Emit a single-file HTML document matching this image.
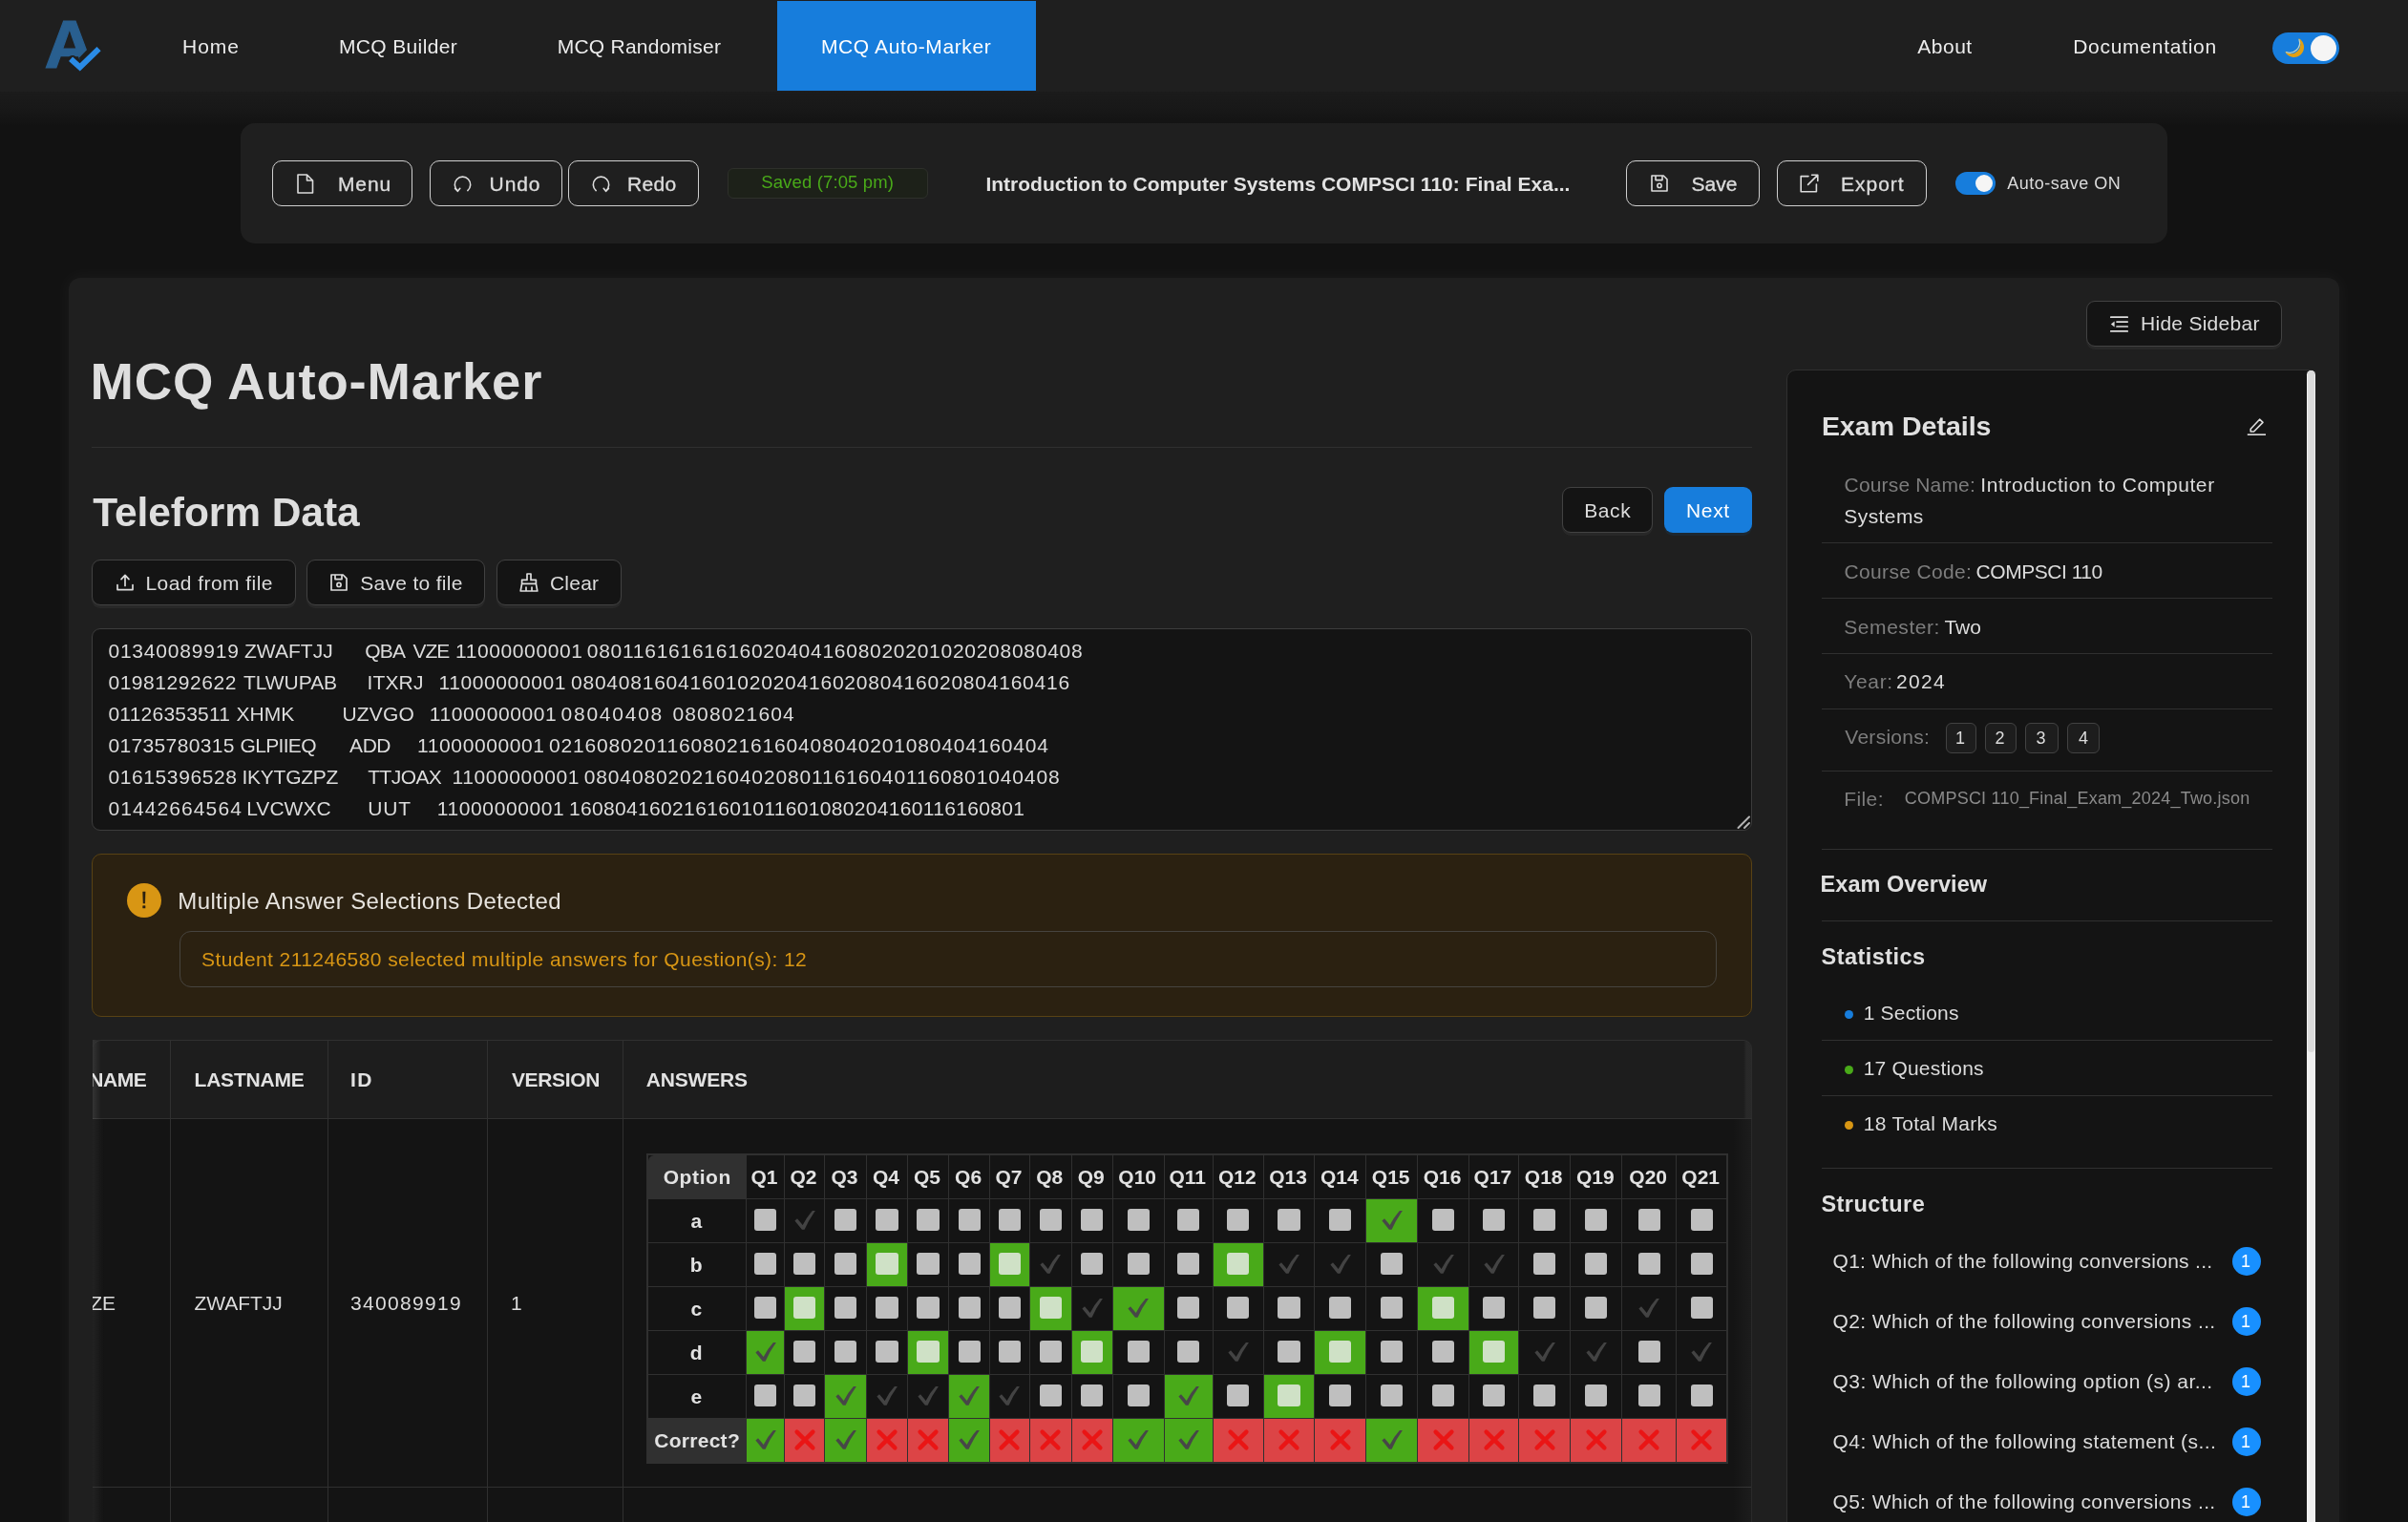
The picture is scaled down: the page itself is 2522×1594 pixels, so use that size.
<!DOCTYPE html>
<html lang="en">
<head>
<meta charset="utf-8">
<title>MCQ Auto-Marker</title>
<style>
html,body{margin:0;padding:0;background:#121212;}
body{width:2522px;height:1594px;overflow:hidden;font-family:"Liberation Sans",sans-serif;}
#app{position:relative;width:2522px;height:1594px;overflow:hidden;will-change:transform;}
.t{position:absolute;white-space:pre;margin:0;padding:0;}
.b{position:absolute;box-sizing:border-box;}
.m{-webkit-text-stroke:0.35px currentColor;}
svg{position:absolute;overflow:visible;}
.hl{position:absolute;height:1px;background:#303030;}
.vl{position:absolute;width:1px;background:#303030;}
</style>
</head>
<body>
<div id="app">
<div class="b" style="left:0;top:96px;width:2522px;height:36px;background:linear-gradient(#1b1b1b,#181818 50%,#141414 85%,#121212);"></div>
<div class="b " style="left:0.0px;top:0.0px;width:2522.0px;height:96.0px;background:#1f1f1f;"></div>
<svg style="left:40px;top:14px" width="70" height="68" viewBox="40 14 70 68">
<text x="0" y="0" font-family="Liberation Sans, sans-serif" font-weight="700" font-size="69.5" fill="#295f8f" stroke="#295f8f" stroke-width="1.2" stroke-linejoin="miter" transform="translate(46.6 71.2) scale(1.05 1)">A</text>
<polygon points="83.2,60.2 91.2,52 101,42 108,42 108,80 83.2,80" fill="#1f1f1f"/>
<polyline points="75.9,63.3 83.7,70.4 101.8,52.8" fill="none" stroke="#1f1f1f" stroke-width="10.4" stroke-linejoin="miter" stroke-linecap="round"/>
<polyline points="76.3,63.7 83.7,70.4 101.4,53.2" fill="none" stroke="#2a8be6" stroke-width="6" stroke-linejoin="miter" stroke-linecap="square"/>
</svg>
<div class="t " style="left:191.0px;top:34.2px;font-size:21px;line-height:29px;color:#ececec;letter-spacing:1.000px;">Home</div>
<div class="t " style="left:355.0px;top:34.2px;font-size:21px;line-height:29px;color:#ececec;letter-spacing:0.350px;">MCQ Builder</div>
<div class="t " style="left:583.7px;top:34.2px;font-size:21px;line-height:29px;color:#ececec;letter-spacing:0.246px;">MCQ Randomiser</div>
<div class="b " style="left:814.0px;top:1.0px;width:271.0px;height:94.0px;background:#177ddc;"></div>
<div class="t " style="left:860.0px;top:34.2px;font-size:21px;line-height:29px;color:#ffffff;letter-spacing:0.607px;">MCQ Auto-Marker</div>
<div class="t " style="left:2008.3px;top:34.2px;font-size:21px;line-height:29px;color:#ececec;letter-spacing:0.500px;">About</div>
<div class="t " style="left:2171.2px;top:34.2px;font-size:21px;line-height:29px;color:#ececec;letter-spacing:0.725px;">Documentation</div>
<div class="b " style="left:2380.0px;top:34.0px;width:70.0px;height:33.0px;background:#177ddc;border-radius:17px;"></div>
<div class="b " style="left:2420.0px;top:37.0px;width:27.0px;height:27.0px;background:#f5f5f5;border-radius:50%;"></div>
<svg style="left:2390px;top:38px" width="26" height="26" viewBox="0 0 26 26">
<path d="M17.3 2.1 A10.5 10.5 0 1 1 3.1 16 A10 10 0 0 0 17.3 2.1 Z" fill="#e3a012"/>
<path d="M4.6 16.6 A10.4 10.4 0 0 0 18 3.6" fill="none" stroke="#d3dcc0" stroke-width="1.2" stroke-linecap="round" opacity="0.9"/>
</svg>
<div class="b " style="left:252.0px;top:129.0px;width:2018.0px;height:126.0px;background:#1f1f1f;border-radius:15px;"></div>
<div class="b " style="left:285.0px;top:168.0px;width:147.0px;height:48.0px;border:1.5px solid #cfcfcf;border-radius:10px;"></div>
<div class="b " style="left:450.0px;top:168.0px;width:139.0px;height:48.0px;border:1.5px solid #cfcfcf;border-radius:10px;"></div>
<div class="b " style="left:595.0px;top:168.0px;width:137.0px;height:48.0px;border:1.5px solid #cfcfcf;border-radius:10px;"></div>
<div class="b " style="left:1703.0px;top:168.0px;width:140.0px;height:48.0px;border:1.5px solid #cfcfcf;border-radius:10px;"></div>
<div class="b " style="left:1861.0px;top:168.0px;width:157.0px;height:48.0px;border:1.5px solid #cfcfcf;border-radius:10px;"></div>
<svg style="left:311px;top:182px" width="18" height="21" viewBox="0 0 18 21"><path d="M1 1 H10.5 L16.5 7 V20 H1 Z M10.5 1 V7 H16.5" fill="none" stroke="#dcdcdc" stroke-width="1.6" stroke-linejoin="round" stroke-linecap="round"/></svg>
<div class="t m" style="left:354.0px;top:178.2px;font-size:21px;line-height:29px;color:#dcdcdc;letter-spacing:0.867px;">Menu</div>
<svg style="left:474px;top:182px" width="21" height="21" viewBox="0 0 21 21"><path d="M5.2 17.6 A8.2 8.2 0 1 1 15.8 17.6" fill="none" stroke="#dcdcdc" stroke-width="1.6" stroke-linejoin="round" stroke-linecap="round"/><path d="M2.6 15.4 L5.4 18.3 L7.8 15.3" fill="none" stroke="#dcdcdc" stroke-width="1.6" stroke-linejoin="round" stroke-linecap="round"/></svg>
<div class="t m" style="left:512.6px;top:178.2px;font-size:21px;line-height:29px;color:#dcdcdc;letter-spacing:0.867px;">Undo</div>
<svg style="left:619px;top:182px" width="21" height="21" viewBox="0 0 21 21"><path d="M5.2 17.6 A8.2 8.2 0 1 1 15.8 17.6" fill="none" stroke="#dcdcdc" stroke-width="1.6" stroke-linejoin="round" stroke-linecap="round"/><path d="M13.2 15.3 L15.6 18.3 L18.4 15.4" fill="none" stroke="#dcdcdc" stroke-width="1.6" stroke-linejoin="round" stroke-linecap="round"/></svg>
<div class="t m" style="left:657.0px;top:178.2px;font-size:21px;line-height:29px;color:#dcdcdc;letter-spacing:0.333px;">Redo</div>
<div class="b " style="left:762.0px;top:176.0px;width:210.0px;height:32.0px;background:#1d2119;border:1px solid #2e302b;border-radius:6px;"></div>
<div class="t " style="left:797.2px;top:178.2px;font-size:18.5px;line-height:26px;color:#49aa19;letter-spacing:0.143px;">Saved (7:05 pm)</div>
<div class="t " style="left:1032.4px;top:177.7px;font-size:21px;line-height:29px;color:#e2e2e2;font-weight:700;letter-spacing:0.011px;">Introduction to Computer Systems COMPSCI 110: Final Exa...</div>
<svg style="left:1728.5px;top:183px" width="18" height="18" viewBox="0 0 18 18"><path d="M1 1 H13.2 L17 4.8 V17 H1 Z M5 1 V5.6 H12 V1" fill="none" stroke="#dcdcdc" stroke-width="1.6" stroke-linejoin="round" stroke-linecap="round"/><circle cx="9" cy="11.4" r="2.1" fill="none" stroke="#dcdcdc" stroke-width="1.6" stroke-linejoin="round" stroke-linecap="round"/></svg>
<div class="t m" style="left:1771.4px;top:178.2px;font-size:21px;line-height:29px;color:#dcdcdc;letter-spacing:0.067px;">Save</div>
<svg style="left:1884.5px;top:182px" width="20" height="20" viewBox="0 0 20 20"><path d="M9 2.6 H1.2 V18.8 H17.4 V11" fill="none" stroke="#dcdcdc" stroke-width="1.6" stroke-linejoin="round" stroke-linecap="round"/><path d="M8.6 11.4 L18.4 1.6 M12.6 1.2 H18.8 V7.4" fill="none" stroke="#dcdcdc" stroke-width="1.6" stroke-linejoin="round" stroke-linecap="round"/></svg>
<div class="t m" style="left:1928.0px;top:178.2px;font-size:21px;line-height:29px;color:#dcdcdc;letter-spacing:0.980px;">Export</div>
<div class="b " style="left:2048.0px;top:180.0px;width:42.0px;height:24.0px;background:#177ddc;border-radius:12px;"></div>
<div class="b " style="left:2069.0px;top:183.0px;width:18.0px;height:18.0px;background:#f5f5f5;border-radius:50%;"></div>
<div class="t " style="left:2102.3px;top:179.7px;font-size:18px;line-height:25px;color:#dcdcdc;letter-spacing:0.500px;">Auto-save ON</div>
<div class="b " style="left:72.0px;top:291.0px;width:2378.0px;height:1409.0px;background:#1f1f1f;border-radius:12px;box-shadow:0 0 16px 4px rgba(255,255,255,0.03);"></div>
<div class="b " style="left:2185.0px;top:314.5px;width:204.5px;height:48.5px;background:#141414;border:1.5px solid #424242;border-radius:9px;box-shadow:0 3px 0 rgba(255,255,255,0.045);"></div>
<svg style="left:2210px;top:329.5px" width="19" height="19" viewBox="0 0 19 19"><path d="M0.8 2.2 H18.2 M7 7.1 H18.2 M7 12 H18.2 M0.8 16.9 H18.2" fill="none" stroke="#dcdcdc" stroke-width="1.7" stroke-linejoin="round" stroke-linecap="round"/><path d="M4.6 6.6 L0.9 9.55 L4.6 12.5 Z" fill="#dcdcdc" stroke="none"/></svg>
<div class="t " style="left:2242.0px;top:324.4px;font-size:21px;line-height:29px;color:#dcdcdc;letter-spacing:0.273px;">Hide Sidebar</div>
<div class="t " style="left:94.6px;top:362.4px;font-size:54.5px;line-height:76px;color:#dedede;font-weight:700;letter-spacing:0.829px;">MCQ Auto-Marker</div>
<div class="hl" style="left:96px;top:467.5px;width:1739px;"></div>
<div class="t " style="left:97.2px;top:507.1px;font-size:42.5px;line-height:59px;color:#dedede;font-weight:700;letter-spacing:-0.067px;">Teleform Data</div>
<div class="b " style="left:1636.2px;top:510.0px;width:94.6px;height:47.8px;background:#141414;border:1.5px solid #424242;border-radius:9px;box-shadow:0 3px 0 rgba(255,255,255,0.045);"></div>
<div class="t " style="left:1659.2px;top:519.6px;font-size:21px;line-height:29px;color:#dcdcdc;letter-spacing:0.600px;">Back</div>
<div class="b " style="left:1743.3px;top:510.0px;width:91.7px;height:47.8px;background:#177ddc;border-radius:9px;box-shadow:0 3px 0 rgba(23,125,220,0.10);"></div>
<div class="t " style="left:1766.0px;top:519.6px;font-size:21px;line-height:29px;color:#ffffff;letter-spacing:0.667px;">Next</div>
<div class="b " style="left:96.3px;top:586.2px;width:213.3px;height:47.4px;background:#141414;border:1.5px solid #424242;border-radius:9px;box-shadow:0 3px 0 rgba(255,255,255,0.045);"></div>
<svg style="left:121.5px;top:601px" width="18" height="18" viewBox="0 0 18 18"><path d="M1 11.6 V16.6 H17 V11.6 M9 12.4 V2 M5 5.6 L9 1.4 L13 5.6" fill="none" stroke="#dcdcdc" stroke-width="1.7" stroke-linejoin="round" stroke-linecap="round"/></svg>
<div class="t " style="left:152.4px;top:595.7px;font-size:21px;line-height:29px;color:#dcdcdc;letter-spacing:0.454px;">Load from file</div>
<div class="b " style="left:321.3px;top:586.2px;width:186.4px;height:47.4px;background:#141414;border:1.5px solid #424242;border-radius:9px;box-shadow:0 3px 0 rgba(255,255,255,0.045);"></div>
<svg style="left:346px;top:601px" width="18" height="18" viewBox="0 0 18 18"><path d="M1 1 H13.2 L17 4.8 V17 H1 Z M5 1 V5.6 H12 V1" fill="none" stroke="#dcdcdc" stroke-width="1.7" stroke-linejoin="round" stroke-linecap="round"/><circle cx="9" cy="11.4" r="2.1" fill="none" stroke="#dcdcdc" stroke-width="1.7" stroke-linejoin="round" stroke-linecap="round"/></svg>
<div class="t " style="left:377.3px;top:595.7px;font-size:21px;line-height:29px;color:#dcdcdc;letter-spacing:0.291px;">Save to file</div>
<div class="b " style="left:520.2px;top:586.2px;width:130.4px;height:47.4px;background:#141414;border:1.5px solid #424242;border-radius:9px;box-shadow:0 3px 0 rgba(255,255,255,0.045);"></div>
<svg style="left:543.5px;top:600px" width="20" height="20" viewBox="0 0 20 20"><path d="M8 1 H12 V7.4 H17.4 V11.4 H2.6 V7.4 H8 Z M2.6 11.4 L1.2 19 H18.8 L17.4 11.4 M7 19 V15 M13 19 V15" fill="none" stroke="#dcdcdc" stroke-width="1.7" stroke-linejoin="round" stroke-linecap="round"/></svg>
<div class="t " style="left:575.9px;top:595.7px;font-size:21px;line-height:29px;color:#dcdcdc;letter-spacing:0.250px;">Clear</div>
<div class="b " style="left:96.0px;top:657.8px;width:1739.0px;height:212.2px;background:#141414;border:1.5px solid #3c3c3c;border-radius:9px;"></div>
<div class="t " style="left:113.4px;top:667.2px;font-size:21px;line-height:29px;color:#dcdcdc;letter-spacing:0.810px;">01340089919</div>
<div class="t " style="left:256.0px;top:667.2px;font-size:21px;line-height:29px;color:#dcdcdc;letter-spacing:0.033px;">ZWAFTJJ</div>
<div class="t " style="left:382.3px;top:667.2px;font-size:21px;line-height:29px;color:#dcdcdc;letter-spacing:-0.800px;">QBA</div>
<div class="t " style="left:432.6px;top:667.2px;font-size:21px;line-height:29px;color:#dcdcdc;letter-spacing:-1.050px;">VZE</div>
<div class="t " style="left:477.0px;top:667.2px;font-size:21px;line-height:29px;color:#dcdcdc;letter-spacing:0.600px;">11000000001</div>
<div class="t " style="left:614.8px;top:667.2px;font-size:21px;line-height:29px;color:#dcdcdc;letter-spacing:0.729px;">080116161616160204041608020201020208080408</div>
<div class="t " style="left:113.4px;top:700.2px;font-size:21px;line-height:29px;color:#dcdcdc;letter-spacing:0.560px;">01981292622</div>
<div class="t " style="left:255.0px;top:700.2px;font-size:21px;line-height:29px;color:#dcdcdc;letter-spacing:-0.050px;">TLWUPAB</div>
<div class="t " style="left:384.5px;top:700.2px;font-size:21px;line-height:29px;color:#dcdcdc;letter-spacing:0.150px;">ITXRJ</div>
<div class="t " style="left:459.5px;top:700.2px;font-size:21px;line-height:29px;color:#dcdcdc;letter-spacing:0.600px;">11000000001</div>
<div class="t " style="left:598.0px;top:700.2px;font-size:21px;line-height:29px;color:#dcdcdc;letter-spacing:0.771px;">080408160416010202041602080416020804160416</div>
<div class="t " style="left:113.4px;top:733.2px;font-size:21px;line-height:29px;color:#dcdcdc;letter-spacing:0.230px;">01126353511</div>
<div class="t " style="left:247.5px;top:733.2px;font-size:21px;line-height:29px;color:#dcdcdc;">XHMK</div>
<div class="t " style="left:358.4px;top:733.2px;font-size:21px;line-height:29px;color:#dcdcdc;letter-spacing:0.200px;">UZVGO</div>
<div class="t " style="left:449.8px;top:733.2px;font-size:21px;line-height:29px;color:#dcdcdc;letter-spacing:0.600px;">11000000001</div>
<div class="t " style="left:587.6px;top:733.2px;font-size:21px;line-height:29px;color:#dcdcdc;letter-spacing:1.743px;">08040408</div>
<div class="t " style="left:704.4px;top:733.2px;font-size:21px;line-height:29px;color:#dcdcdc;letter-spacing:1.178px;">0808021604</div>
<div class="t " style="left:113.4px;top:766.2px;font-size:21px;line-height:29px;color:#dcdcdc;letter-spacing:0.360px;">01735780315</div>
<div class="t " style="left:251.5px;top:766.2px;font-size:21px;line-height:29px;color:#dcdcdc;letter-spacing:-0.667px;">GLPIIEQ</div>
<div class="t " style="left:366.1px;top:766.2px;font-size:21px;line-height:29px;color:#dcdcdc;letter-spacing:-0.450px;">ADD</div>
<div class="t " style="left:437.1px;top:766.2px;font-size:21px;line-height:29px;color:#dcdcdc;letter-spacing:0.600px;">11000000001</div>
<div class="t " style="left:575.0px;top:766.2px;font-size:21px;line-height:29px;color:#dcdcdc;letter-spacing:0.829px;">021608020116080216160408040201080404160404</div>
<div class="t " style="left:113.4px;top:799.2px;font-size:21px;line-height:29px;color:#dcdcdc;letter-spacing:0.610px;">01615396528</div>
<div class="t " style="left:253.5px;top:799.2px;font-size:21px;line-height:29px;color:#dcdcdc;letter-spacing:-0.257px;">IKYTGZPZ</div>
<div class="t " style="left:385.3px;top:799.2px;font-size:21px;line-height:29px;color:#dcdcdc;letter-spacing:-0.600px;">TTJOAX</div>
<div class="t " style="left:473.5px;top:799.2px;font-size:21px;line-height:29px;color:#dcdcdc;letter-spacing:0.600px;">11000000001</div>
<div class="t " style="left:611.7px;top:799.2px;font-size:21px;line-height:29px;color:#dcdcdc;letter-spacing:0.869px;">0804080202160402080116160401160801040408</div>
<div class="t " style="left:113.4px;top:832.2px;font-size:21px;line-height:29px;color:#dcdcdc;letter-spacing:1.100px;">01442664564</div>
<div class="t " style="left:258.2px;top:832.2px;font-size:21px;line-height:29px;color:#dcdcdc;letter-spacing:0.040px;">LVCWXC</div>
<div class="t " style="left:385.3px;top:832.2px;font-size:21px;line-height:29px;color:#dcdcdc;letter-spacing:0.800px;">UUT</div>
<div class="t " style="left:457.8px;top:832.2px;font-size:21px;line-height:29px;color:#dcdcdc;letter-spacing:0.600px;">11000000001</div>
<div class="t " style="left:596.0px;top:832.2px;font-size:21px;line-height:29px;color:#dcdcdc;letter-spacing:0.333px;">1608041602161601011601080204160116160801</div>
<svg style="left:1819px;top:854px" width="14" height="14" viewBox="0 0 14 14"><path d="M1.5 13 L13 1.5 M8 13 L13 8" stroke="#b4b4b4" stroke-width="2" fill="none" stroke-linecap="round"/></svg>
<div class="b " style="left:96.0px;top:893.5px;width:1739.0px;height:171.5px;background:#2b2111;border:1.5px solid #594214;border-radius:10px;"></div>
<div class="b " style="left:133.0px;top:924.8px;width:36.2px;height:36.2px;background:#d89614;border-radius:50%;"></div>
<div class="t " style="left:147.6px;top:926.4px;font-size:24.5px;line-height:34px;color:#2b2111;-webkit-text-stroke:0.5px #2b2111;">!</div>
<div class="t " style="left:186.3px;top:926.9px;font-size:24px;line-height:34px;color:#e6e3de;letter-spacing:0.382px;">Multiple Answer Selections Detected</div>
<div class="b " style="left:187.5px;top:975.0px;width:1610.3px;height:59.3px;border:1.5px solid #47443f;border-radius:12px;"></div>
<div class="t " style="left:211.0px;top:990.2px;font-size:21px;line-height:29px;color:#d89614;letter-spacing:0.419px;">Student 211246580 selected multiple answers for Question(s): 12</div>
<div class="b " style="left:1871.0px;top:386.8px;width:554.0px;height:1313.2px;background:#141414;border:1px solid #303030;border-radius:10px 6px 0 0;"></div>
<div class="b " style="left:2416.0px;top:388.0px;width:9.0px;height:1312.0px;background:#efefef;border-radius:4.5px 4.5px 0 0;"></div>
<div class="b " style="left:2417.0px;top:388.0px;width:7.0px;height:714.0px;background:#dbdbdb;border-radius:4px;"></div>
<div class="t " style="left:1908.0px;top:425.6px;font-size:28.5px;line-height:40px;color:#e0e0e0;font-weight:700;">Exam Details</div>
<svg style="left:2352.5px;top:435.5px" width="21" height="21" viewBox="0 0 21 21"><path d="M4.2 13.2 L13.6 3.2 L17 6.4 L7.6 16 H4.2 Z" fill="none" stroke="#dcdcdc" stroke-width="1.6" stroke-linejoin="round"/><path d="M0.8 19.2 H20" stroke="#dcdcdc" stroke-width="1.6" fill="none"/></svg>
<div class="t " style="left:1931.6px;top:492.8px;font-size:21px;line-height:29px;color:#7d7d7d;letter-spacing:0.164px;">Course Name:</div>
<div class="t " style="left:2074.3px;top:492.8px;font-size:21px;line-height:29px;color:#dcdcdc;letter-spacing:0.596px;">Introduction to Computer</div>
<div class="t " style="left:1931.3px;top:525.8px;font-size:21px;line-height:29px;color:#dcdcdc;letter-spacing:0.417px;">Systems</div>
<div class="hl" style="left:1908.3px;top:568.1px;width:471.70000000000005px;"></div>
<div class="t " style="left:1931.6px;top:583.7px;font-size:21px;line-height:29px;color:#7d7d7d;letter-spacing:0.327px;">Course Code:</div>
<div class="t " style="left:2069.6px;top:583.7px;font-size:21px;line-height:29px;color:#dcdcdc;letter-spacing:-0.470px;">COMPSCI 110</div>
<div class="hl" style="left:1908.3px;top:625.9px;width:471.70000000000005px;"></div>
<div class="t " style="left:1931.3px;top:641.5px;font-size:21px;line-height:29px;color:#7d7d7d;letter-spacing:0.550px;">Semester:</div>
<div class="t " style="left:2036.4px;top:641.5px;font-size:21px;line-height:29px;color:#dcdcdc;letter-spacing:-0.050px;">Two</div>
<div class="hl" style="left:1908.3px;top:684.0px;width:471.70000000000005px;"></div>
<div class="t " style="left:1931.3px;top:699.2px;font-size:21px;line-height:29px;color:#7d7d7d;letter-spacing:0.650px;">Year:</div>
<div class="t " style="left:1986.0px;top:699.2px;font-size:21px;line-height:29px;color:#dcdcdc;letter-spacing:1.333px;">2024</div>
<div class="hl" style="left:1908.3px;top:742.0px;width:471.70000000000005px;"></div>
<div class="t " style="left:1932.3px;top:757.2px;font-size:21px;line-height:29px;color:#7d7d7d;letter-spacing:0.275px;">Versions:</div>
<div class="b " style="left:2038.0px;top:757.0px;width:32.0px;height:32.0px;background:#1d1d1d;border:1.5px solid #424242;border-radius:6px;"></div>
<div class="t " style="left:2048.0px;top:760.7px;font-size:18px;line-height:25px;color:#dcdcdc;">1</div>
<div class="b " style="left:2079.0px;top:757.0px;width:33.0px;height:32.0px;background:#1d1d1d;border:1.5px solid #424242;border-radius:6px;"></div>
<div class="t " style="left:2089.5px;top:760.7px;font-size:18px;line-height:25px;color:#dcdcdc;">2</div>
<div class="b " style="left:2121.0px;top:757.0px;width:35.0px;height:32.0px;background:#1d1d1d;border:1.5px solid #424242;border-radius:6px;"></div>
<div class="t " style="left:2132.5px;top:760.7px;font-size:18px;line-height:25px;color:#dcdcdc;">3</div>
<div class="b " style="left:2165.0px;top:757.0px;width:34.0px;height:32.0px;background:#1d1d1d;border:1.5px solid #424242;border-radius:6px;"></div>
<div class="t " style="left:2177.0px;top:760.7px;font-size:18px;line-height:25px;color:#dcdcdc;">4</div>
<div class="hl" style="left:1908.3px;top:806.8px;width:471.70000000000005px;"></div>
<div class="t " style="left:1931.2px;top:821.9px;font-size:21px;line-height:29px;color:#7d7d7d;letter-spacing:0.400px;">File:</div>
<div class="t " style="left:1994.8px;top:823.7px;font-size:18px;line-height:25px;color:#8a8a8a;letter-spacing:0.217px;">COMPSCI 110_Final_Exam_2024_Two.json</div>
<div class="hl" style="left:1908.3px;top:888.8px;width:471.70000000000005px;"></div>
<div class="t " style="left:1906.6px;top:910.3px;font-size:23.5px;line-height:33px;color:#e0e0e0;font-weight:700;letter-spacing:0.058px;">Exam Overview</div>
<div class="hl" style="left:1908.3px;top:964.0px;width:471.70000000000005px;"></div>
<div class="t " style="left:1907.6px;top:985.7px;font-size:23.5px;line-height:33px;color:#e0e0e0;font-weight:700;letter-spacing:0.433px;">Statistics</div>
<div class="b " style="left:1932.0px;top:1057.7px;width:9.4px;height:9.4px;background:#177ddc;border-radius:50%;"></div>
<div class="t " style="left:1951.7px;top:1045.8px;font-size:21px;line-height:29px;color:#dcdcdc;letter-spacing:0.189px;">1 Sections</div>
<div class="b " style="left:1932.0px;top:1115.7px;width:9.4px;height:9.4px;background:#49aa19;border-radius:50%;"></div>
<div class="t " style="left:1951.7px;top:1103.9px;font-size:21px;line-height:29px;color:#dcdcdc;letter-spacing:0.191px;">17 Questions</div>
<div class="b " style="left:1932.0px;top:1173.6px;width:9.4px;height:9.4px;background:#d89614;border-radius:50%;"></div>
<div class="t " style="left:1951.7px;top:1161.9px;font-size:21px;line-height:29px;color:#dcdcdc;letter-spacing:0.308px;">18 Total Marks</div>
<div class="hl" style="left:1908.3px;top:1088.8px;width:471.70000000000005px;"></div>
<div class="hl" style="left:1908.3px;top:1146.9px;width:471.70000000000005px;"></div>
<div class="hl" style="left:1908.3px;top:1222.9px;width:471.70000000000005px;"></div>
<div class="t " style="left:1907.4px;top:1244.8px;font-size:23.5px;line-height:33px;color:#e0e0e0;font-weight:700;letter-spacing:0.488px;">Structure</div>
<div class="t " style="left:1919.5px;top:1306.0px;font-size:21px;line-height:29px;color:#dcdcdc;letter-spacing:0.305px;">Q1: Which of the following conversions ...</div>
<div class="b " style="left:2338.0px;top:1305.9px;width:30.0px;height:30.0px;background:#1890ff;border-radius:50%;"></div>
<div class="t " style="left:2347.0px;top:1308.7px;font-size:18px;line-height:25px;color:#ffffff;">1</div>
<div class="t " style="left:1919.5px;top:1369.0px;font-size:21px;line-height:29px;color:#dcdcdc;letter-spacing:0.378px;">Q2: Which of the following conversions ...</div>
<div class="b " style="left:2338.0px;top:1368.9px;width:30.0px;height:30.0px;background:#1890ff;border-radius:50%;"></div>
<div class="t " style="left:2347.0px;top:1371.6px;font-size:18px;line-height:25px;color:#ffffff;">1</div>
<div class="t " style="left:1919.5px;top:1431.9px;font-size:21px;line-height:29px;color:#dcdcdc;letter-spacing:0.464px;">Q3: Which of the following option (s) ar...</div>
<div class="b " style="left:2338.0px;top:1431.8px;width:30.0px;height:30.0px;background:#1890ff;border-radius:50%;"></div>
<div class="t " style="left:2347.0px;top:1434.6px;font-size:18px;line-height:25px;color:#ffffff;">1</div>
<div class="t " style="left:1919.5px;top:1494.9px;font-size:21px;line-height:29px;color:#dcdcdc;letter-spacing:0.451px;">Q4: Which of the following statement (s...</div>
<div class="b " style="left:2338.0px;top:1494.8px;width:30.0px;height:30.0px;background:#1890ff;border-radius:50%;"></div>
<div class="t " style="left:2347.0px;top:1497.5px;font-size:18px;line-height:25px;color:#ffffff;">1</div>
<div class="t " style="left:1919.5px;top:1557.8px;font-size:21px;line-height:29px;color:#dcdcdc;letter-spacing:0.378px;">Q5: Which of the following conversions ...</div>
<div class="b " style="left:2338.0px;top:1557.7px;width:30.0px;height:30.0px;background:#1890ff;border-radius:50%;"></div>
<div class="t " style="left:2347.0px;top:1560.5px;font-size:18px;line-height:25px;color:#ffffff;">1</div>
<div class="b " style="left:96.9px;top:1089.0px;width:1738.1px;height:83.0px;background:#1d1d1d;border-radius:9px 9px 0 0;border-top:1px solid #303030;border-right:1px solid #2c2c2c;"></div>
<div class="b " style="left:96.9px;top:1172.0px;width:1738.1px;height:528.0px;background:#141414;"></div>
<div class="hl" style="left:96.9px;top:1171px;width:1738.1px;"></div>
<div class="hl" style="left:96.9px;top:1557px;width:1738.1px;"></div>
<div class="b " style="left:1825.5px;top:1090.0px;width:8.5px;height:81.0px;background:linear-gradient(90deg,rgba(255,255,255,0),rgba(255,255,255,0.05) 40%);border-radius:0 9px 0 0;"></div>
<div class="vl" style="left:177.8px;top:1090px;height:620px;"></div>
<div class="vl" style="left:342.9px;top:1090px;height:620px;"></div>
<div class="vl" style="left:510.1px;top:1090px;height:620px;"></div>
<div class="vl" style="left:651.9px;top:1090px;height:620px;"></div>
<div class="vl" style="left:1834px;top:1172px;height:620px;background:#2a2a2a;"></div>
<div class="b" style="left:96.9px;top:1100px;width:70px;height:60px;overflow:hidden;">
<div class="t " style="left:-62.1px;top:16.1px;font-size:21px;line-height:29px;color:#e2e2e2;font-weight:700;letter-spacing:-0.439px;">FIRSTNAME</div>
</div>
<div class="t " style="left:203.5px;top:1116.1px;font-size:21px;line-height:29px;color:#e2e2e2;font-weight:700;letter-spacing:-0.200px;">LASTNAME</div>
<div class="t " style="left:367.1px;top:1116.1px;font-size:21px;line-height:29px;color:#e2e2e2;font-weight:700;letter-spacing:1.400px;">ID</div>
<div class="t " style="left:535.9px;top:1116.1px;font-size:21px;line-height:29px;color:#e2e2e2;font-weight:700;letter-spacing:-0.333px;">VERSION</div>
<div class="t " style="left:676.7px;top:1116.1px;font-size:21px;line-height:29px;color:#e2e2e2;font-weight:700;letter-spacing:-0.167px;">ANSWERS</div>
<div class="b " style="left:1815.0px;top:1172.0px;width:19.0px;height:528.0px;background:linear-gradient(90deg,rgba(255,255,255,0),rgba(255,255,255,0.035));"></div>
<div class="b " style="left:96.9px;top:1089.0px;width:9.0px;height:83.0px;background:linear-gradient(90deg,rgba(255,255,255,0.10),rgba(255,255,255,0));"></div>
<div class="b " style="left:96.9px;top:1172.0px;width:12.0px;height:528.0px;background:linear-gradient(90deg,rgba(70,70,70,0.28),rgba(40,40,40,0));"></div>
<div class="b" style="left:96.9px;top:1340px;width:60px;height:60px;overflow:hidden;">
<div class="t" style="left:-65.7px;top:9.6px;font-size:21px;line-height:30px;color:#dcdcdc;">QBA VZE</div></div>
<div class="t " style="left:203.5px;top:1350.1px;font-size:21px;line-height:29px;color:#dcdcdc;letter-spacing:-0.033px;">ZWAFTJJ</div>
<div class="t " style="left:367.1px;top:1350.1px;font-size:21px;line-height:29px;color:#dcdcdc;letter-spacing:1.300px;">340089919</div>
<div class="t " style="left:534.9px;top:1350.1px;font-size:21px;line-height:29px;color:#dcdcdc;">1</div>
<div class="b " style="left:677.0px;top:1208.0px;width:1133.1px;height:325.0px;background:#303030;"></div>
<div class="b " style="left:678.8px;top:1209.5px;width:102.2px;height:45.5px;background:#141414;"></div>
<div class="b " style="left:679.3px;top:1210.0px;width:101.8px;height:45.0px;background:#303030;border-radius:6px 0 0 0;"></div>
<div class="t " style="left:694.7px;top:1218.3px;font-size:21px;line-height:29px;color:#e2e2e2;font-weight:700;letter-spacing:0.600px;">Option</div>
<div class="b " style="left:782.1px;top:1210.0px;width:38.9px;height:45.0px;background:#141414;"></div>
<div class="t " style="left:786.5px;top:1218.3px;font-size:21px;line-height:29px;color:#e2e2e2;font-weight:700;">Q1</div>
<div class="b " style="left:822.0px;top:1210.0px;width:41.0px;height:45.0px;background:#141414;"></div>
<div class="t " style="left:827.5px;top:1218.3px;font-size:21px;line-height:29px;color:#e2e2e2;font-weight:700;">Q2</div>
<div class="b " style="left:864.0px;top:1210.0px;width:43.0px;height:45.0px;background:#141414;"></div>
<div class="t " style="left:870.5px;top:1218.3px;font-size:21px;line-height:29px;color:#e2e2e2;font-weight:700;">Q3</div>
<div class="b " style="left:908.0px;top:1210.0px;width:41.9px;height:45.0px;background:#141414;"></div>
<div class="t " style="left:914.0px;top:1218.3px;font-size:21px;line-height:29px;color:#e2e2e2;font-weight:700;">Q4</div>
<div class="b " style="left:950.9px;top:1210.0px;width:42.2px;height:45.0px;background:#141414;"></div>
<div class="t " style="left:957.0px;top:1218.3px;font-size:21px;line-height:29px;color:#e2e2e2;font-weight:700;">Q5</div>
<div class="b " style="left:994.1px;top:1210.0px;width:42.0px;height:45.0px;background:#141414;"></div>
<div class="t " style="left:1000.1px;top:1218.3px;font-size:21px;line-height:29px;color:#e2e2e2;font-weight:700;">Q6</div>
<div class="b " style="left:1037.1px;top:1210.0px;width:40.6px;height:45.0px;background:#141414;"></div>
<div class="t " style="left:1042.4px;top:1218.3px;font-size:21px;line-height:29px;color:#e2e2e2;font-weight:700;">Q7</div>
<div class="b " style="left:1078.7px;top:1210.0px;width:43.0px;height:45.0px;background:#141414;"></div>
<div class="t " style="left:1085.2px;top:1218.3px;font-size:21px;line-height:29px;color:#e2e2e2;font-weight:700;">Q8</div>
<div class="b " style="left:1122.7px;top:1210.0px;width:42.0px;height:45.0px;background:#141414;"></div>
<div class="t " style="left:1128.7px;top:1218.3px;font-size:21px;line-height:29px;color:#e2e2e2;font-weight:700;">Q9</div>
<div class="b " style="left:1165.7px;top:1210.0px;width:52.9px;height:45.0px;background:#141414;"></div>
<div class="t " style="left:1171.3px;top:1218.3px;font-size:21px;line-height:29px;color:#e2e2e2;font-weight:700;">Q10</div>
<div class="b " style="left:1219.6px;top:1210.0px;width:50.3px;height:45.0px;background:#141414;"></div>
<div class="t " style="left:1224.5px;top:1218.3px;font-size:21px;line-height:29px;color:#e2e2e2;font-weight:700;">Q11</div>
<div class="b " style="left:1270.9px;top:1210.0px;width:51.9px;height:45.0px;background:#141414;"></div>
<div class="t " style="left:1276.0px;top:1218.3px;font-size:21px;line-height:29px;color:#e2e2e2;font-weight:700;">Q12</div>
<div class="b " style="left:1323.8px;top:1210.0px;width:52.4px;height:45.0px;background:#141414;"></div>
<div class="t " style="left:1329.2px;top:1218.3px;font-size:21px;line-height:29px;color:#e2e2e2;font-weight:700;">Q13</div>
<div class="b " style="left:1377.2px;top:1210.0px;width:53.0px;height:45.0px;background:#141414;"></div>
<div class="t " style="left:1382.9px;top:1218.3px;font-size:21px;line-height:29px;color:#e2e2e2;font-weight:700;">Q14</div>
<div class="b " style="left:1431.2px;top:1210.0px;width:52.9px;height:45.0px;background:#141414;"></div>
<div class="t " style="left:1436.8px;top:1218.3px;font-size:21px;line-height:29px;color:#e2e2e2;font-weight:700;">Q15</div>
<div class="b " style="left:1485.1px;top:1210.0px;width:52.9px;height:45.0px;background:#141414;"></div>
<div class="t " style="left:1490.7px;top:1218.3px;font-size:21px;line-height:29px;color:#e2e2e2;font-weight:700;">Q16</div>
<div class="b " style="left:1539.0px;top:1210.0px;width:50.9px;height:45.0px;background:#141414;"></div>
<div class="t " style="left:1543.6px;top:1218.3px;font-size:21px;line-height:29px;color:#e2e2e2;font-weight:700;">Q17</div>
<div class="b " style="left:1590.9px;top:1210.0px;width:53.5px;height:45.0px;background:#141414;"></div>
<div class="t " style="left:1596.8px;top:1218.3px;font-size:21px;line-height:29px;color:#e2e2e2;font-weight:700;">Q18</div>
<div class="b " style="left:1645.4px;top:1210.0px;width:52.9px;height:45.0px;background:#141414;"></div>
<div class="t " style="left:1651.0px;top:1218.3px;font-size:21px;line-height:29px;color:#e2e2e2;font-weight:700;">Q19</div>
<div class="b " style="left:1699.3px;top:1210.0px;width:55.6px;height:45.0px;background:#141414;"></div>
<div class="t " style="left:1706.3px;top:1218.3px;font-size:21px;line-height:29px;color:#e2e2e2;font-weight:700;">Q20</div>
<div class="b " style="left:1755.9px;top:1210.0px;width:52.5px;height:45.0px;background:#141414;"></div>
<div class="t " style="left:1761.3px;top:1218.3px;font-size:21px;line-height:29px;color:#e2e2e2;font-weight:700;">Q21</div>
<div class="b " style="left:679.3px;top:1256.0px;width:101.8px;height:45.0px;background:#141414;"></div>
<div class="t " style="left:723.4px;top:1264.3px;font-size:21px;line-height:29px;color:#e2e2e2;font-weight:700;">a</div>
<div class="b " style="left:782.1px;top:1256.0px;width:38.9px;height:45.0px;background:#141414;"></div>
<div class="b " style="left:789.9px;top:1266.1px;width:23.2px;height:23.2px;background:#bfbfbf;border-radius:3px;"></div>
<div class="b " style="left:822.0px;top:1256.0px;width:41.0px;height:45.0px;background:#141414;"></div>
<svg style="left:831.5px;top:1266.5px" width="22" height="22" viewBox="0 0 22 22"><path d="M0.4 11.6 L3 9.3 L8.7 15.9 Q13 7.6 18.9 1.1 L21.9 1.1 Q15.2 10.4 10.6 20.7 L7.9 20.7 Z" fill="#434343"/></svg>
<div class="b " style="left:864.0px;top:1256.0px;width:43.0px;height:45.0px;background:#141414;"></div>
<div class="b " style="left:873.9px;top:1266.1px;width:23.2px;height:23.2px;background:#bfbfbf;border-radius:3px;"></div>
<div class="b " style="left:908.0px;top:1256.0px;width:41.9px;height:45.0px;background:#141414;"></div>
<div class="b " style="left:917.4px;top:1266.1px;width:23.2px;height:23.2px;background:#bfbfbf;border-radius:3px;"></div>
<div class="b " style="left:950.9px;top:1256.0px;width:42.2px;height:45.0px;background:#141414;"></div>
<div class="b " style="left:960.4px;top:1266.1px;width:23.2px;height:23.2px;background:#bfbfbf;border-radius:3px;"></div>
<div class="b " style="left:994.1px;top:1256.0px;width:42.0px;height:45.0px;background:#141414;"></div>
<div class="b " style="left:1003.5px;top:1266.1px;width:23.2px;height:23.2px;background:#bfbfbf;border-radius:3px;"></div>
<div class="b " style="left:1037.1px;top:1256.0px;width:40.6px;height:45.0px;background:#141414;"></div>
<div class="b " style="left:1045.8px;top:1266.1px;width:23.2px;height:23.2px;background:#bfbfbf;border-radius:3px;"></div>
<div class="b " style="left:1078.7px;top:1256.0px;width:43.0px;height:45.0px;background:#141414;"></div>
<div class="b " style="left:1088.6px;top:1266.1px;width:23.2px;height:23.2px;background:#bfbfbf;border-radius:3px;"></div>
<div class="b " style="left:1122.7px;top:1256.0px;width:42.0px;height:45.0px;background:#141414;"></div>
<div class="b " style="left:1132.1px;top:1266.1px;width:23.2px;height:23.2px;background:#bfbfbf;border-radius:3px;"></div>
<div class="b " style="left:1165.7px;top:1256.0px;width:52.9px;height:45.0px;background:#141414;"></div>
<div class="b " style="left:1180.6px;top:1266.1px;width:23.2px;height:23.2px;background:#bfbfbf;border-radius:3px;"></div>
<div class="b " style="left:1219.6px;top:1256.0px;width:50.3px;height:45.0px;background:#141414;"></div>
<div class="b " style="left:1233.2px;top:1266.1px;width:23.2px;height:23.2px;background:#bfbfbf;border-radius:3px;"></div>
<div class="b " style="left:1270.9px;top:1256.0px;width:51.9px;height:45.0px;background:#141414;"></div>
<div class="b " style="left:1285.2px;top:1266.1px;width:23.2px;height:23.2px;background:#bfbfbf;border-radius:3px;"></div>
<div class="b " style="left:1323.8px;top:1256.0px;width:52.4px;height:45.0px;background:#141414;"></div>
<div class="b " style="left:1338.4px;top:1266.1px;width:23.2px;height:23.2px;background:#bfbfbf;border-radius:3px;"></div>
<div class="b " style="left:1377.2px;top:1256.0px;width:53.0px;height:45.0px;background:#141414;"></div>
<div class="b " style="left:1392.1px;top:1266.1px;width:23.2px;height:23.2px;background:#bfbfbf;border-radius:3px;"></div>
<div class="b " style="left:1431.2px;top:1256.0px;width:52.9px;height:45.0px;background:#49aa19;"></div>
<svg style="left:1446.7px;top:1266.5px" width="22" height="22" viewBox="0 0 22 22"><path d="M0.4 11.6 L3 9.3 L8.7 15.9 Q13 7.6 18.9 1.1 L21.9 1.1 Q15.2 10.4 10.6 20.7 L7.9 20.7 Z" fill="#474747"/></svg>
<div class="b " style="left:1485.1px;top:1256.0px;width:52.9px;height:45.0px;background:#141414;"></div>
<div class="b " style="left:1500.0px;top:1266.1px;width:23.2px;height:23.2px;background:#bfbfbf;border-radius:3px;"></div>
<div class="b " style="left:1539.0px;top:1256.0px;width:50.9px;height:45.0px;background:#141414;"></div>
<div class="b " style="left:1552.9px;top:1266.1px;width:23.2px;height:23.2px;background:#bfbfbf;border-radius:3px;"></div>
<div class="b " style="left:1590.9px;top:1256.0px;width:53.5px;height:45.0px;background:#141414;"></div>
<div class="b " style="left:1606.1px;top:1266.1px;width:23.2px;height:23.2px;background:#bfbfbf;border-radius:3px;"></div>
<div class="b " style="left:1645.4px;top:1256.0px;width:52.9px;height:45.0px;background:#141414;"></div>
<div class="b " style="left:1660.2px;top:1266.1px;width:23.2px;height:23.2px;background:#bfbfbf;border-radius:3px;"></div>
<div class="b " style="left:1699.3px;top:1256.0px;width:55.6px;height:45.0px;background:#141414;"></div>
<div class="b " style="left:1715.5px;top:1266.1px;width:23.2px;height:23.2px;background:#bfbfbf;border-radius:3px;"></div>
<div class="b " style="left:1755.9px;top:1256.0px;width:52.5px;height:45.0px;background:#141414;"></div>
<div class="b " style="left:1770.6px;top:1266.1px;width:23.2px;height:23.2px;background:#bfbfbf;border-radius:3px;"></div>
<div class="b " style="left:679.3px;top:1302.0px;width:101.8px;height:45.0px;background:#141414;"></div>
<div class="t " style="left:722.8px;top:1310.3px;font-size:21px;line-height:29px;color:#e2e2e2;font-weight:700;">b</div>
<div class="b " style="left:782.1px;top:1302.0px;width:38.9px;height:45.0px;background:#141414;"></div>
<div class="b " style="left:789.9px;top:1312.1px;width:23.2px;height:23.2px;background:#bfbfbf;border-radius:3px;"></div>
<div class="b " style="left:822.0px;top:1302.0px;width:41.0px;height:45.0px;background:#141414;"></div>
<div class="b " style="left:830.9px;top:1312.1px;width:23.2px;height:23.2px;background:#bfbfbf;border-radius:3px;"></div>
<div class="b " style="left:864.0px;top:1302.0px;width:43.0px;height:45.0px;background:#141414;"></div>
<div class="b " style="left:873.9px;top:1312.1px;width:23.2px;height:23.2px;background:#bfbfbf;border-radius:3px;"></div>
<div class="b " style="left:908.0px;top:1302.0px;width:41.9px;height:45.0px;background:#49aa19;"></div>
<div class="b " style="left:917.4px;top:1312.1px;width:23.2px;height:23.2px;background:#cfe1c6;border-radius:3px;"></div>
<div class="b " style="left:950.9px;top:1302.0px;width:42.2px;height:45.0px;background:#141414;"></div>
<div class="b " style="left:960.4px;top:1312.1px;width:23.2px;height:23.2px;background:#bfbfbf;border-radius:3px;"></div>
<div class="b " style="left:994.1px;top:1302.0px;width:42.0px;height:45.0px;background:#141414;"></div>
<div class="b " style="left:1003.5px;top:1312.1px;width:23.2px;height:23.2px;background:#bfbfbf;border-radius:3px;"></div>
<div class="b " style="left:1037.1px;top:1302.0px;width:40.6px;height:45.0px;background:#49aa19;"></div>
<div class="b " style="left:1045.8px;top:1312.1px;width:23.2px;height:23.2px;background:#cfe1c6;border-radius:3px;"></div>
<div class="b " style="left:1078.7px;top:1302.0px;width:43.0px;height:45.0px;background:#141414;"></div>
<svg style="left:1089.2px;top:1312.5px" width="22" height="22" viewBox="0 0 22 22"><path d="M0.4 11.6 L3 9.3 L8.7 15.9 Q13 7.6 18.9 1.1 L21.9 1.1 Q15.2 10.4 10.6 20.7 L7.9 20.7 Z" fill="#434343"/></svg>
<div class="b " style="left:1122.7px;top:1302.0px;width:42.0px;height:45.0px;background:#141414;"></div>
<div class="b " style="left:1132.1px;top:1312.1px;width:23.2px;height:23.2px;background:#bfbfbf;border-radius:3px;"></div>
<div class="b " style="left:1165.7px;top:1302.0px;width:52.9px;height:45.0px;background:#141414;"></div>
<div class="b " style="left:1180.6px;top:1312.1px;width:23.2px;height:23.2px;background:#bfbfbf;border-radius:3px;"></div>
<div class="b " style="left:1219.6px;top:1302.0px;width:50.3px;height:45.0px;background:#141414;"></div>
<div class="b " style="left:1233.2px;top:1312.1px;width:23.2px;height:23.2px;background:#bfbfbf;border-radius:3px;"></div>
<div class="b " style="left:1270.9px;top:1302.0px;width:51.9px;height:45.0px;background:#49aa19;"></div>
<div class="b " style="left:1285.2px;top:1312.1px;width:23.2px;height:23.2px;background:#cfe1c6;border-radius:3px;"></div>
<div class="b " style="left:1323.8px;top:1302.0px;width:52.4px;height:45.0px;background:#141414;"></div>
<svg style="left:1339.0px;top:1312.5px" width="22" height="22" viewBox="0 0 22 22"><path d="M0.4 11.6 L3 9.3 L8.7 15.9 Q13 7.6 18.9 1.1 L21.9 1.1 Q15.2 10.4 10.6 20.7 L7.9 20.7 Z" fill="#434343"/></svg>
<div class="b " style="left:1377.2px;top:1302.0px;width:53.0px;height:45.0px;background:#141414;"></div>
<svg style="left:1392.7px;top:1312.5px" width="22" height="22" viewBox="0 0 22 22"><path d="M0.4 11.6 L3 9.3 L8.7 15.9 Q13 7.6 18.9 1.1 L21.9 1.1 Q15.2 10.4 10.6 20.7 L7.9 20.7 Z" fill="#434343"/></svg>
<div class="b " style="left:1431.2px;top:1302.0px;width:52.9px;height:45.0px;background:#141414;"></div>
<div class="b " style="left:1446.1px;top:1312.1px;width:23.2px;height:23.2px;background:#bfbfbf;border-radius:3px;"></div>
<div class="b " style="left:1485.1px;top:1302.0px;width:52.9px;height:45.0px;background:#141414;"></div>
<svg style="left:1500.5px;top:1312.5px" width="22" height="22" viewBox="0 0 22 22"><path d="M0.4 11.6 L3 9.3 L8.7 15.9 Q13 7.6 18.9 1.1 L21.9 1.1 Q15.2 10.4 10.6 20.7 L7.9 20.7 Z" fill="#434343"/></svg>
<div class="b " style="left:1539.0px;top:1302.0px;width:50.9px;height:45.0px;background:#141414;"></div>
<svg style="left:1553.5px;top:1312.5px" width="22" height="22" viewBox="0 0 22 22"><path d="M0.4 11.6 L3 9.3 L8.7 15.9 Q13 7.6 18.9 1.1 L21.9 1.1 Q15.2 10.4 10.6 20.7 L7.9 20.7 Z" fill="#434343"/></svg>
<div class="b " style="left:1590.9px;top:1302.0px;width:53.5px;height:45.0px;background:#141414;"></div>
<div class="b " style="left:1606.1px;top:1312.1px;width:23.2px;height:23.2px;background:#bfbfbf;border-radius:3px;"></div>
<div class="b " style="left:1645.4px;top:1302.0px;width:52.9px;height:45.0px;background:#141414;"></div>
<div class="b " style="left:1660.2px;top:1312.1px;width:23.2px;height:23.2px;background:#bfbfbf;border-radius:3px;"></div>
<div class="b " style="left:1699.3px;top:1302.0px;width:55.6px;height:45.0px;background:#141414;"></div>
<div class="b " style="left:1715.5px;top:1312.1px;width:23.2px;height:23.2px;background:#bfbfbf;border-radius:3px;"></div>
<div class="b " style="left:1755.9px;top:1302.0px;width:52.5px;height:45.0px;background:#141414;"></div>
<div class="b " style="left:1770.6px;top:1312.1px;width:23.2px;height:23.2px;background:#bfbfbf;border-radius:3px;"></div>
<div class="b " style="left:679.3px;top:1348.0px;width:101.8px;height:45.0px;background:#141414;"></div>
<div class="t " style="left:723.4px;top:1356.3px;font-size:21px;line-height:29px;color:#e2e2e2;font-weight:700;">c</div>
<div class="b " style="left:782.1px;top:1348.0px;width:38.9px;height:45.0px;background:#141414;"></div>
<div class="b " style="left:789.9px;top:1358.1px;width:23.2px;height:23.2px;background:#bfbfbf;border-radius:3px;"></div>
<div class="b " style="left:822.0px;top:1348.0px;width:41.0px;height:45.0px;background:#49aa19;"></div>
<div class="b " style="left:830.9px;top:1358.1px;width:23.2px;height:23.2px;background:#cfe1c6;border-radius:3px;"></div>
<div class="b " style="left:864.0px;top:1348.0px;width:43.0px;height:45.0px;background:#141414;"></div>
<div class="b " style="left:873.9px;top:1358.1px;width:23.2px;height:23.2px;background:#bfbfbf;border-radius:3px;"></div>
<div class="b " style="left:908.0px;top:1348.0px;width:41.9px;height:45.0px;background:#141414;"></div>
<div class="b " style="left:917.4px;top:1358.1px;width:23.2px;height:23.2px;background:#bfbfbf;border-radius:3px;"></div>
<div class="b " style="left:950.9px;top:1348.0px;width:42.2px;height:45.0px;background:#141414;"></div>
<div class="b " style="left:960.4px;top:1358.1px;width:23.2px;height:23.2px;background:#bfbfbf;border-radius:3px;"></div>
<div class="b " style="left:994.1px;top:1348.0px;width:42.0px;height:45.0px;background:#141414;"></div>
<div class="b " style="left:1003.5px;top:1358.1px;width:23.2px;height:23.2px;background:#bfbfbf;border-radius:3px;"></div>
<div class="b " style="left:1037.1px;top:1348.0px;width:40.6px;height:45.0px;background:#141414;"></div>
<div class="b " style="left:1045.8px;top:1358.1px;width:23.2px;height:23.2px;background:#bfbfbf;border-radius:3px;"></div>
<div class="b " style="left:1078.7px;top:1348.0px;width:43.0px;height:45.0px;background:#49aa19;"></div>
<div class="b " style="left:1088.6px;top:1358.1px;width:23.2px;height:23.2px;background:#cfe1c6;border-radius:3px;"></div>
<div class="b " style="left:1122.7px;top:1348.0px;width:42.0px;height:45.0px;background:#141414;"></div>
<svg style="left:1132.7px;top:1358.5px" width="22" height="22" viewBox="0 0 22 22"><path d="M0.4 11.6 L3 9.3 L8.7 15.9 Q13 7.6 18.9 1.1 L21.9 1.1 Q15.2 10.4 10.6 20.7 L7.9 20.7 Z" fill="#434343"/></svg>
<div class="b " style="left:1165.7px;top:1348.0px;width:52.9px;height:45.0px;background:#49aa19;"></div>
<svg style="left:1181.2px;top:1358.5px" width="22" height="22" viewBox="0 0 22 22"><path d="M0.4 11.6 L3 9.3 L8.7 15.9 Q13 7.6 18.9 1.1 L21.9 1.1 Q15.2 10.4 10.6 20.7 L7.9 20.7 Z" fill="#474747"/></svg>
<div class="b " style="left:1219.6px;top:1348.0px;width:50.3px;height:45.0px;background:#141414;"></div>
<div class="b " style="left:1233.2px;top:1358.1px;width:23.2px;height:23.2px;background:#bfbfbf;border-radius:3px;"></div>
<div class="b " style="left:1270.9px;top:1348.0px;width:51.9px;height:45.0px;background:#141414;"></div>
<div class="b " style="left:1285.2px;top:1358.1px;width:23.2px;height:23.2px;background:#bfbfbf;border-radius:3px;"></div>
<div class="b " style="left:1323.8px;top:1348.0px;width:52.4px;height:45.0px;background:#141414;"></div>
<div class="b " style="left:1338.4px;top:1358.1px;width:23.2px;height:23.2px;background:#bfbfbf;border-radius:3px;"></div>
<div class="b " style="left:1377.2px;top:1348.0px;width:53.0px;height:45.0px;background:#141414;"></div>
<div class="b " style="left:1392.1px;top:1358.1px;width:23.2px;height:23.2px;background:#bfbfbf;border-radius:3px;"></div>
<div class="b " style="left:1431.2px;top:1348.0px;width:52.9px;height:45.0px;background:#141414;"></div>
<div class="b " style="left:1446.1px;top:1358.1px;width:23.2px;height:23.2px;background:#bfbfbf;border-radius:3px;"></div>
<div class="b " style="left:1485.1px;top:1348.0px;width:52.9px;height:45.0px;background:#49aa19;"></div>
<div class="b " style="left:1500.0px;top:1358.1px;width:23.2px;height:23.2px;background:#cfe1c6;border-radius:3px;"></div>
<div class="b " style="left:1539.0px;top:1348.0px;width:50.9px;height:45.0px;background:#141414;"></div>
<div class="b " style="left:1552.9px;top:1358.1px;width:23.2px;height:23.2px;background:#bfbfbf;border-radius:3px;"></div>
<div class="b " style="left:1590.9px;top:1348.0px;width:53.5px;height:45.0px;background:#141414;"></div>
<div class="b " style="left:1606.1px;top:1358.1px;width:23.2px;height:23.2px;background:#bfbfbf;border-radius:3px;"></div>
<div class="b " style="left:1645.4px;top:1348.0px;width:52.9px;height:45.0px;background:#141414;"></div>
<div class="b " style="left:1660.2px;top:1358.1px;width:23.2px;height:23.2px;background:#bfbfbf;border-radius:3px;"></div>
<div class="b " style="left:1699.3px;top:1348.0px;width:55.6px;height:45.0px;background:#141414;"></div>
<svg style="left:1716.1px;top:1358.5px" width="22" height="22" viewBox="0 0 22 22"><path d="M0.4 11.6 L3 9.3 L8.7 15.9 Q13 7.6 18.9 1.1 L21.9 1.1 Q15.2 10.4 10.6 20.7 L7.9 20.7 Z" fill="#434343"/></svg>
<div class="b " style="left:1755.9px;top:1348.0px;width:52.5px;height:45.0px;background:#141414;"></div>
<div class="b " style="left:1770.6px;top:1358.1px;width:23.2px;height:23.2px;background:#bfbfbf;border-radius:3px;"></div>
<div class="b " style="left:679.3px;top:1394.0px;width:101.8px;height:45.0px;background:#141414;"></div>
<div class="t " style="left:722.8px;top:1402.3px;font-size:21px;line-height:29px;color:#e2e2e2;font-weight:700;">d</div>
<div class="b " style="left:782.1px;top:1394.0px;width:38.9px;height:45.0px;background:#49aa19;"></div>
<svg style="left:790.5px;top:1404.5px" width="22" height="22" viewBox="0 0 22 22"><path d="M0.4 11.6 L3 9.3 L8.7 15.9 Q13 7.6 18.9 1.1 L21.9 1.1 Q15.2 10.4 10.6 20.7 L7.9 20.7 Z" fill="#474747"/></svg>
<div class="b " style="left:822.0px;top:1394.0px;width:41.0px;height:45.0px;background:#141414;"></div>
<div class="b " style="left:830.9px;top:1404.1px;width:23.2px;height:23.2px;background:#bfbfbf;border-radius:3px;"></div>
<div class="b " style="left:864.0px;top:1394.0px;width:43.0px;height:45.0px;background:#141414;"></div>
<div class="b " style="left:873.9px;top:1404.1px;width:23.2px;height:23.2px;background:#bfbfbf;border-radius:3px;"></div>
<div class="b " style="left:908.0px;top:1394.0px;width:41.9px;height:45.0px;background:#141414;"></div>
<div class="b " style="left:917.4px;top:1404.1px;width:23.2px;height:23.2px;background:#bfbfbf;border-radius:3px;"></div>
<div class="b " style="left:950.9px;top:1394.0px;width:42.2px;height:45.0px;background:#49aa19;"></div>
<div class="b " style="left:960.4px;top:1404.1px;width:23.2px;height:23.2px;background:#cfe1c6;border-radius:3px;"></div>
<div class="b " style="left:994.1px;top:1394.0px;width:42.0px;height:45.0px;background:#141414;"></div>
<div class="b " style="left:1003.5px;top:1404.1px;width:23.2px;height:23.2px;background:#bfbfbf;border-radius:3px;"></div>
<div class="b " style="left:1037.1px;top:1394.0px;width:40.6px;height:45.0px;background:#141414;"></div>
<div class="b " style="left:1045.8px;top:1404.1px;width:23.2px;height:23.2px;background:#bfbfbf;border-radius:3px;"></div>
<div class="b " style="left:1078.7px;top:1394.0px;width:43.0px;height:45.0px;background:#141414;"></div>
<div class="b " style="left:1088.6px;top:1404.1px;width:23.2px;height:23.2px;background:#bfbfbf;border-radius:3px;"></div>
<div class="b " style="left:1122.7px;top:1394.0px;width:42.0px;height:45.0px;background:#49aa19;"></div>
<div class="b " style="left:1132.1px;top:1404.1px;width:23.2px;height:23.2px;background:#cfe1c6;border-radius:3px;"></div>
<div class="b " style="left:1165.7px;top:1394.0px;width:52.9px;height:45.0px;background:#141414;"></div>
<div class="b " style="left:1180.6px;top:1404.1px;width:23.2px;height:23.2px;background:#bfbfbf;border-radius:3px;"></div>
<div class="b " style="left:1219.6px;top:1394.0px;width:50.3px;height:45.0px;background:#141414;"></div>
<div class="b " style="left:1233.2px;top:1404.1px;width:23.2px;height:23.2px;background:#bfbfbf;border-radius:3px;"></div>
<div class="b " style="left:1270.9px;top:1394.0px;width:51.9px;height:45.0px;background:#141414;"></div>
<svg style="left:1285.8px;top:1404.5px" width="22" height="22" viewBox="0 0 22 22"><path d="M0.4 11.6 L3 9.3 L8.7 15.9 Q13 7.6 18.9 1.1 L21.9 1.1 Q15.2 10.4 10.6 20.7 L7.9 20.7 Z" fill="#434343"/></svg>
<div class="b " style="left:1323.8px;top:1394.0px;width:52.4px;height:45.0px;background:#141414;"></div>
<div class="b " style="left:1338.4px;top:1404.1px;width:23.2px;height:23.2px;background:#bfbfbf;border-radius:3px;"></div>
<div class="b " style="left:1377.2px;top:1394.0px;width:53.0px;height:45.0px;background:#49aa19;"></div>
<div class="b " style="left:1392.1px;top:1404.1px;width:23.2px;height:23.2px;background:#cfe1c6;border-radius:3px;"></div>
<div class="b " style="left:1431.2px;top:1394.0px;width:52.9px;height:45.0px;background:#141414;"></div>
<div class="b " style="left:1446.1px;top:1404.1px;width:23.2px;height:23.2px;background:#bfbfbf;border-radius:3px;"></div>
<div class="b " style="left:1485.1px;top:1394.0px;width:52.9px;height:45.0px;background:#141414;"></div>
<div class="b " style="left:1500.0px;top:1404.1px;width:23.2px;height:23.2px;background:#bfbfbf;border-radius:3px;"></div>
<div class="b " style="left:1539.0px;top:1394.0px;width:50.9px;height:45.0px;background:#49aa19;"></div>
<div class="b " style="left:1552.9px;top:1404.1px;width:23.2px;height:23.2px;background:#cfe1c6;border-radius:3px;"></div>
<div class="b " style="left:1590.9px;top:1394.0px;width:53.5px;height:45.0px;background:#141414;"></div>
<svg style="left:1606.7px;top:1404.5px" width="22" height="22" viewBox="0 0 22 22"><path d="M0.4 11.6 L3 9.3 L8.7 15.9 Q13 7.6 18.9 1.1 L21.9 1.1 Q15.2 10.4 10.6 20.7 L7.9 20.7 Z" fill="#434343"/></svg>
<div class="b " style="left:1645.4px;top:1394.0px;width:52.9px;height:45.0px;background:#141414;"></div>
<svg style="left:1660.8px;top:1404.5px" width="22" height="22" viewBox="0 0 22 22"><path d="M0.4 11.6 L3 9.3 L8.7 15.9 Q13 7.6 18.9 1.1 L21.9 1.1 Q15.2 10.4 10.6 20.7 L7.9 20.7 Z" fill="#434343"/></svg>
<div class="b " style="left:1699.3px;top:1394.0px;width:55.6px;height:45.0px;background:#141414;"></div>
<div class="b " style="left:1715.5px;top:1404.1px;width:23.2px;height:23.2px;background:#bfbfbf;border-radius:3px;"></div>
<div class="b " style="left:1755.9px;top:1394.0px;width:52.5px;height:45.0px;background:#141414;"></div>
<svg style="left:1771.2px;top:1404.5px" width="22" height="22" viewBox="0 0 22 22"><path d="M0.4 11.6 L3 9.3 L8.7 15.9 Q13 7.6 18.9 1.1 L21.9 1.1 Q15.2 10.4 10.6 20.7 L7.9 20.7 Z" fill="#434343"/></svg>
<div class="b " style="left:679.3px;top:1440.0px;width:101.8px;height:45.0px;background:#141414;"></div>
<div class="t " style="left:723.4px;top:1448.3px;font-size:21px;line-height:29px;color:#e2e2e2;font-weight:700;">e</div>
<div class="b " style="left:782.1px;top:1440.0px;width:38.9px;height:45.0px;background:#141414;"></div>
<div class="b " style="left:789.9px;top:1450.1px;width:23.2px;height:23.2px;background:#bfbfbf;border-radius:3px;"></div>
<div class="b " style="left:822.0px;top:1440.0px;width:41.0px;height:45.0px;background:#141414;"></div>
<div class="b " style="left:830.9px;top:1450.1px;width:23.2px;height:23.2px;background:#bfbfbf;border-radius:3px;"></div>
<div class="b " style="left:864.0px;top:1440.0px;width:43.0px;height:45.0px;background:#49aa19;"></div>
<svg style="left:874.5px;top:1450.5px" width="22" height="22" viewBox="0 0 22 22"><path d="M0.4 11.6 L3 9.3 L8.7 15.9 Q13 7.6 18.9 1.1 L21.9 1.1 Q15.2 10.4 10.6 20.7 L7.9 20.7 Z" fill="#474747"/></svg>
<div class="b " style="left:908.0px;top:1440.0px;width:41.9px;height:45.0px;background:#141414;"></div>
<svg style="left:918.0px;top:1450.5px" width="22" height="22" viewBox="0 0 22 22"><path d="M0.4 11.6 L3 9.3 L8.7 15.9 Q13 7.6 18.9 1.1 L21.9 1.1 Q15.2 10.4 10.6 20.7 L7.9 20.7 Z" fill="#434343"/></svg>
<div class="b " style="left:950.9px;top:1440.0px;width:42.2px;height:45.0px;background:#141414;"></div>
<svg style="left:961.0px;top:1450.5px" width="22" height="22" viewBox="0 0 22 22"><path d="M0.4 11.6 L3 9.3 L8.7 15.9 Q13 7.6 18.9 1.1 L21.9 1.1 Q15.2 10.4 10.6 20.7 L7.9 20.7 Z" fill="#434343"/></svg>
<div class="b " style="left:994.1px;top:1440.0px;width:42.0px;height:45.0px;background:#49aa19;"></div>
<svg style="left:1004.1px;top:1450.5px" width="22" height="22" viewBox="0 0 22 22"><path d="M0.4 11.6 L3 9.3 L8.7 15.9 Q13 7.6 18.9 1.1 L21.9 1.1 Q15.2 10.4 10.6 20.7 L7.9 20.7 Z" fill="#474747"/></svg>
<div class="b " style="left:1037.1px;top:1440.0px;width:40.6px;height:45.0px;background:#141414;"></div>
<svg style="left:1046.4px;top:1450.5px" width="22" height="22" viewBox="0 0 22 22"><path d="M0.4 11.6 L3 9.3 L8.7 15.9 Q13 7.6 18.9 1.1 L21.9 1.1 Q15.2 10.4 10.6 20.7 L7.9 20.7 Z" fill="#434343"/></svg>
<div class="b " style="left:1078.7px;top:1440.0px;width:43.0px;height:45.0px;background:#141414;"></div>
<div class="b " style="left:1088.6px;top:1450.1px;width:23.2px;height:23.2px;background:#bfbfbf;border-radius:3px;"></div>
<div class="b " style="left:1122.7px;top:1440.0px;width:42.0px;height:45.0px;background:#141414;"></div>
<div class="b " style="left:1132.1px;top:1450.1px;width:23.2px;height:23.2px;background:#bfbfbf;border-radius:3px;"></div>
<div class="b " style="left:1165.7px;top:1440.0px;width:52.9px;height:45.0px;background:#141414;"></div>
<div class="b " style="left:1180.6px;top:1450.1px;width:23.2px;height:23.2px;background:#bfbfbf;border-radius:3px;"></div>
<div class="b " style="left:1219.6px;top:1440.0px;width:50.3px;height:45.0px;background:#49aa19;"></div>
<svg style="left:1233.8px;top:1450.5px" width="22" height="22" viewBox="0 0 22 22"><path d="M0.4 11.6 L3 9.3 L8.7 15.9 Q13 7.6 18.9 1.1 L21.9 1.1 Q15.2 10.4 10.6 20.7 L7.9 20.7 Z" fill="#474747"/></svg>
<div class="b " style="left:1270.9px;top:1440.0px;width:51.9px;height:45.0px;background:#141414;"></div>
<div class="b " style="left:1285.2px;top:1450.1px;width:23.2px;height:23.2px;background:#bfbfbf;border-radius:3px;"></div>
<div class="b " style="left:1323.8px;top:1440.0px;width:52.4px;height:45.0px;background:#49aa19;"></div>
<div class="b " style="left:1338.4px;top:1450.1px;width:23.2px;height:23.2px;background:#cfe1c6;border-radius:3px;"></div>
<div class="b " style="left:1377.2px;top:1440.0px;width:53.0px;height:45.0px;background:#141414;"></div>
<div class="b " style="left:1392.1px;top:1450.1px;width:23.2px;height:23.2px;background:#bfbfbf;border-radius:3px;"></div>
<div class="b " style="left:1431.2px;top:1440.0px;width:52.9px;height:45.0px;background:#141414;"></div>
<div class="b " style="left:1446.1px;top:1450.1px;width:23.2px;height:23.2px;background:#bfbfbf;border-radius:3px;"></div>
<div class="b " style="left:1485.1px;top:1440.0px;width:52.9px;height:45.0px;background:#141414;"></div>
<div class="b " style="left:1500.0px;top:1450.1px;width:23.2px;height:23.2px;background:#bfbfbf;border-radius:3px;"></div>
<div class="b " style="left:1539.0px;top:1440.0px;width:50.9px;height:45.0px;background:#141414;"></div>
<div class="b " style="left:1552.9px;top:1450.1px;width:23.2px;height:23.2px;background:#bfbfbf;border-radius:3px;"></div>
<div class="b " style="left:1590.9px;top:1440.0px;width:53.5px;height:45.0px;background:#141414;"></div>
<div class="b " style="left:1606.1px;top:1450.1px;width:23.2px;height:23.2px;background:#bfbfbf;border-radius:3px;"></div>
<div class="b " style="left:1645.4px;top:1440.0px;width:52.9px;height:45.0px;background:#141414;"></div>
<div class="b " style="left:1660.2px;top:1450.1px;width:23.2px;height:23.2px;background:#bfbfbf;border-radius:3px;"></div>
<div class="b " style="left:1699.3px;top:1440.0px;width:55.6px;height:45.0px;background:#141414;"></div>
<div class="b " style="left:1715.5px;top:1450.1px;width:23.2px;height:23.2px;background:#bfbfbf;border-radius:3px;"></div>
<div class="b " style="left:1755.9px;top:1440.0px;width:52.5px;height:45.0px;background:#141414;"></div>
<div class="b " style="left:1770.6px;top:1450.1px;width:23.2px;height:23.2px;background:#bfbfbf;border-radius:3px;"></div>
<div class="b " style="left:679.3px;top:1486.0px;width:101.8px;height:45.0px;background:#303030;"></div>
<div class="t " style="left:685.2px;top:1494.3px;font-size:21px;line-height:29px;color:#e2e2e2;font-weight:700;letter-spacing:0.286px;">Correct?</div>
<div class="b " style="left:782.1px;top:1486.0px;width:38.9px;height:45.0px;background:#49aa19;"></div>
<svg style="left:790.5px;top:1496.5px" width="22" height="22" viewBox="0 0 22 22"><path d="M0.4 11.6 L3 9.3 L8.7 15.9 Q13 7.6 18.9 1.1 L21.9 1.1 Q15.2 10.4 10.6 20.7 L7.9 20.7 Z" fill="#474747"/></svg>
<div class="b " style="left:822.0px;top:1486.0px;width:41.0px;height:45.0px;background:#dc4446;"></div>
<svg style="left:831.5px;top:1496.5px" width="22" height="22" viewBox="0 0 22 22"><path d="M2.6 2.6 L19.4 19.4 M19.4 2.6 L2.6 19.4" stroke="#ea1515" stroke-width="4.4" stroke-linecap="round" fill="none"/></svg>
<div class="b " style="left:864.0px;top:1486.0px;width:43.0px;height:45.0px;background:#49aa19;"></div>
<svg style="left:874.5px;top:1496.5px" width="22" height="22" viewBox="0 0 22 22"><path d="M0.4 11.6 L3 9.3 L8.7 15.9 Q13 7.6 18.9 1.1 L21.9 1.1 Q15.2 10.4 10.6 20.7 L7.9 20.7 Z" fill="#474747"/></svg>
<div class="b " style="left:908.0px;top:1486.0px;width:41.9px;height:45.0px;background:#dc4446;"></div>
<svg style="left:918.0px;top:1496.5px" width="22" height="22" viewBox="0 0 22 22"><path d="M2.6 2.6 L19.4 19.4 M19.4 2.6 L2.6 19.4" stroke="#ea1515" stroke-width="4.4" stroke-linecap="round" fill="none"/></svg>
<div class="b " style="left:950.9px;top:1486.0px;width:42.2px;height:45.0px;background:#dc4446;"></div>
<svg style="left:961.0px;top:1496.5px" width="22" height="22" viewBox="0 0 22 22"><path d="M2.6 2.6 L19.4 19.4 M19.4 2.6 L2.6 19.4" stroke="#ea1515" stroke-width="4.4" stroke-linecap="round" fill="none"/></svg>
<div class="b " style="left:994.1px;top:1486.0px;width:42.0px;height:45.0px;background:#49aa19;"></div>
<svg style="left:1004.1px;top:1496.5px" width="22" height="22" viewBox="0 0 22 22"><path d="M0.4 11.6 L3 9.3 L8.7 15.9 Q13 7.6 18.9 1.1 L21.9 1.1 Q15.2 10.4 10.6 20.7 L7.9 20.7 Z" fill="#474747"/></svg>
<div class="b " style="left:1037.1px;top:1486.0px;width:40.6px;height:45.0px;background:#dc4446;"></div>
<svg style="left:1046.4px;top:1496.5px" width="22" height="22" viewBox="0 0 22 22"><path d="M2.6 2.6 L19.4 19.4 M19.4 2.6 L2.6 19.4" stroke="#ea1515" stroke-width="4.4" stroke-linecap="round" fill="none"/></svg>
<div class="b " style="left:1078.7px;top:1486.0px;width:43.0px;height:45.0px;background:#dc4446;"></div>
<svg style="left:1089.2px;top:1496.5px" width="22" height="22" viewBox="0 0 22 22"><path d="M2.6 2.6 L19.4 19.4 M19.4 2.6 L2.6 19.4" stroke="#ea1515" stroke-width="4.4" stroke-linecap="round" fill="none"/></svg>
<div class="b " style="left:1122.7px;top:1486.0px;width:42.0px;height:45.0px;background:#dc4446;"></div>
<svg style="left:1132.7px;top:1496.5px" width="22" height="22" viewBox="0 0 22 22"><path d="M2.6 2.6 L19.4 19.4 M19.4 2.6 L2.6 19.4" stroke="#ea1515" stroke-width="4.4" stroke-linecap="round" fill="none"/></svg>
<div class="b " style="left:1165.7px;top:1486.0px;width:52.9px;height:45.0px;background:#49aa19;"></div>
<svg style="left:1181.2px;top:1496.5px" width="22" height="22" viewBox="0 0 22 22"><path d="M0.4 11.6 L3 9.3 L8.7 15.9 Q13 7.6 18.9 1.1 L21.9 1.1 Q15.2 10.4 10.6 20.7 L7.9 20.7 Z" fill="#474747"/></svg>
<div class="b " style="left:1219.6px;top:1486.0px;width:50.3px;height:45.0px;background:#49aa19;"></div>
<svg style="left:1233.8px;top:1496.5px" width="22" height="22" viewBox="0 0 22 22"><path d="M0.4 11.6 L3 9.3 L8.7 15.9 Q13 7.6 18.9 1.1 L21.9 1.1 Q15.2 10.4 10.6 20.7 L7.9 20.7 Z" fill="#474747"/></svg>
<div class="b " style="left:1270.9px;top:1486.0px;width:51.9px;height:45.0px;background:#dc4446;"></div>
<svg style="left:1285.8px;top:1496.5px" width="22" height="22" viewBox="0 0 22 22"><path d="M2.6 2.6 L19.4 19.4 M19.4 2.6 L2.6 19.4" stroke="#ea1515" stroke-width="4.4" stroke-linecap="round" fill="none"/></svg>
<div class="b " style="left:1323.8px;top:1486.0px;width:52.4px;height:45.0px;background:#dc4446;"></div>
<svg style="left:1339.0px;top:1496.5px" width="22" height="22" viewBox="0 0 22 22"><path d="M2.6 2.6 L19.4 19.4 M19.4 2.6 L2.6 19.4" stroke="#ea1515" stroke-width="4.4" stroke-linecap="round" fill="none"/></svg>
<div class="b " style="left:1377.2px;top:1486.0px;width:53.0px;height:45.0px;background:#dc4446;"></div>
<svg style="left:1392.7px;top:1496.5px" width="22" height="22" viewBox="0 0 22 22"><path d="M2.6 2.6 L19.4 19.4 M19.4 2.6 L2.6 19.4" stroke="#ea1515" stroke-width="4.4" stroke-linecap="round" fill="none"/></svg>
<div class="b " style="left:1431.2px;top:1486.0px;width:52.9px;height:45.0px;background:#49aa19;"></div>
<svg style="left:1446.7px;top:1496.5px" width="22" height="22" viewBox="0 0 22 22"><path d="M0.4 11.6 L3 9.3 L8.7 15.9 Q13 7.6 18.9 1.1 L21.9 1.1 Q15.2 10.4 10.6 20.7 L7.9 20.7 Z" fill="#474747"/></svg>
<div class="b " style="left:1485.1px;top:1486.0px;width:52.9px;height:45.0px;background:#dc4446;"></div>
<svg style="left:1500.5px;top:1496.5px" width="22" height="22" viewBox="0 0 22 22"><path d="M2.6 2.6 L19.4 19.4 M19.4 2.6 L2.6 19.4" stroke="#ea1515" stroke-width="4.4" stroke-linecap="round" fill="none"/></svg>
<div class="b " style="left:1539.0px;top:1486.0px;width:50.9px;height:45.0px;background:#dc4446;"></div>
<svg style="left:1553.5px;top:1496.5px" width="22" height="22" viewBox="0 0 22 22"><path d="M2.6 2.6 L19.4 19.4 M19.4 2.6 L2.6 19.4" stroke="#ea1515" stroke-width="4.4" stroke-linecap="round" fill="none"/></svg>
<div class="b " style="left:1590.9px;top:1486.0px;width:53.5px;height:45.0px;background:#dc4446;"></div>
<svg style="left:1606.7px;top:1496.5px" width="22" height="22" viewBox="0 0 22 22"><path d="M2.6 2.6 L19.4 19.4 M19.4 2.6 L2.6 19.4" stroke="#ea1515" stroke-width="4.4" stroke-linecap="round" fill="none"/></svg>
<div class="b " style="left:1645.4px;top:1486.0px;width:52.9px;height:45.0px;background:#dc4446;"></div>
<svg style="left:1660.8px;top:1496.5px" width="22" height="22" viewBox="0 0 22 22"><path d="M2.6 2.6 L19.4 19.4 M19.4 2.6 L2.6 19.4" stroke="#ea1515" stroke-width="4.4" stroke-linecap="round" fill="none"/></svg>
<div class="b " style="left:1699.3px;top:1486.0px;width:55.6px;height:45.0px;background:#dc4446;"></div>
<svg style="left:1716.1px;top:1496.5px" width="22" height="22" viewBox="0 0 22 22"><path d="M2.6 2.6 L19.4 19.4 M19.4 2.6 L2.6 19.4" stroke="#ea1515" stroke-width="4.4" stroke-linecap="round" fill="none"/></svg>
<div class="b " style="left:1755.9px;top:1486.0px;width:52.5px;height:45.0px;background:#dc4446;"></div>
<svg style="left:1771.2px;top:1496.5px" width="22" height="22" viewBox="0 0 22 22"><path d="M2.6 2.6 L19.4 19.4 M19.4 2.6 L2.6 19.4" stroke="#ea1515" stroke-width="4.4" stroke-linecap="round" fill="none"/></svg>
</div>
</body>
</html>
